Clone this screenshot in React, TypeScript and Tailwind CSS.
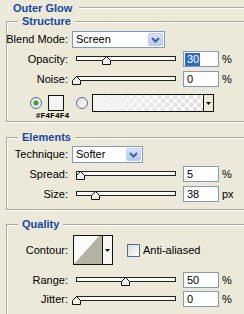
import type { ReactNode } from 'react';

function Label({ children }: { children: ReactNode }) {
  return (
    <span className="flex w-[61px] shrink-0 justify-end whitespace-nowrap leading-[13px]">
      <span>{children}</span>
    </span>
  );
}

function Group({ title, className, children }: { title: string; className: string; children: ReactNode }) {
  return (
    <div
      className={`relative ml-[6px] border-y border-l border-[#aca899] shadow-[inset_1px_1px_0_#fff,0_1px_0_#fff] ${className}`}
    >
      <span className="absolute left-[11px] top-[-7px] bg-[#ece9d8] px-[4px] font-bold leading-[13px] text-[#1747a6]">
        {title}
      </span>
      {children}
    </div>
  );
}

function Slider({ thumb }: { thumb: number }) {
  const cx = thumb + 0.5;
  return (
    <svg className="ml-[4px] shrink-0" width={108} height={16} viewBox="0 0 108 16">
      <rect x={4.5} y={5.5} width={99} height={4} fill="#fbfbf8" stroke="#222" />
      <polygon
        points={`${cx},5.5 ${cx + 4},9.5 ${cx + 4},13.5 ${cx - 4},13.5 ${cx - 4},9.5`}
        fill="#f1f0ea"
        stroke="#111"
      />
    </svg>
  );
}

function SliderRow({
  label,
  thumb,
  value,
  unit,
  selected,
  className
}: {
  label: string;
  thumb: number;
  value: string;
  unit: string;
  selected?: boolean;
  className: string;
}) {
  return (
    <div className={`flex h-[16px] items-center ${className}`}>
      <Label>{label}</Label>
      <Slider thumb={thumb} />
      <div className="ml-[3px] flex h-[16px] w-[36px] shrink-0 items-center border border-[#7f9db9] bg-white pl-[1px]">
        {selected ? (
          <span className="bg-[#316ac5] pl-[2px] pr-[1px] leading-[13px] text-white">{value}</span>
        ) : (
          <span className="pl-[2px] leading-[13px]">{value}</span>
        )}
      </div>
      <span className="ml-[3px] leading-[13px]">{unit}</span>
    </div>
  );
}

function Select({ value, width }: { value: string; width: string }) {
  return (
    <div className={`ml-[4px] flex h-[17px] shrink-0 border border-[#7f9db9] bg-white ${width}`}>
      <span className="flex-1 pl-[3px] leading-[15px]">{value}</span>
      <div className="m-[1px] flex w-[15px] items-center justify-center rounded-[2px] border border-[#bccdf7] bg-[linear-gradient(#d6e2fd,#b7c9f6)]">
        <svg width={9} height={6} viewBox="0 0 9 6">
          <path d="M1 1 L4.5 4.5 L8 1" fill="none" stroke="#4d6185" strokeWidth={2} />
        </svg>
      </div>
    </div>
  );
}

function Radio({ checked }: { checked?: boolean }) {
  return (
    <svg className="mt-[3px] shrink-0" width={12} height={12} viewBox="0 0 12 12">
      <defs>
        <linearGradient id="rf" x1="0" y1="0" x2="1" y2="1">
          <stop offset="0" stopColor="#dcdcd5" />
          <stop offset="1" stopColor="#ffffff" />
        </linearGradient>
      </defs>
      <circle cx={6} cy={6} r={5.5} fill="url(#rf)" stroke="#4a6f9e" />
      {checked ? <circle cx={6} cy={6} r={2.5} fill="#2fa52a" /> : null}
    </svg>
  );
}

function GradientSwatch() {
  return (
    <svg className="ml-[4px] shrink-0" width={122} height={18} viewBox="0 0 122 18">
      <defs>
        <pattern id="ck" width={8} height={8} patternUnits="userSpaceOnUse" x={1} y={1}>
          <rect width={8} height={8} fill="#ffffff" />
          <rect width={4} height={4} fill="#dedede" />
          <rect x={4} y={4} width={4} height={4} fill="#dedede" />
        </pattern>
        <linearGradient id="fade" x1="0" y1="0" x2="1" y2="0">
          <stop offset="0" stopColor="#f4f4f4" stopOpacity={1} />
          <stop offset="1" stopColor="#f4f4f4" stopOpacity={0} />
        </linearGradient>
      </defs>
      <rect x={1} y={1} width={110} height={16} fill="url(#ck)" />
      <rect x={1} y={1} width={110} height={16} fill="url(#fade)" />
      <rect x={111} y={1} width={10} height={16} fill="#ece9d8" />
      <rect x={0.5} y={0.5} width={121} height={17} fill="none" stroke="#111" />
      <line x1={111.5} y1={1} x2={111.5} y2={17} stroke="#111" />
      <polygon points="114,8 119,8 116.5,11" fill="#111" />
    </svg>
  );
}

export default function App() {
  return (
    <div className="h-[314px] w-[244px] overflow-hidden bg-[#ece9d8] font-['Liberation_Sans',Arial,sans-serif] text-[11px] text-black">
      <div className="flex h-[16px] items-center pl-[13px]">
        <span className="font-bold leading-[13px] text-[#1747a6]">Outer Glow</span>
        <div className="ml-[7px] h-[2px] flex-1 border-t border-b border-t-[#aca899] border-b-white" />
      </div>

      <Group title="Structure" className="mt-[5px] h-[101px]">
        <div className="mt-[9px] flex h-[17px] items-center">
          <Label>Blend Mode:</Label>
          <Select value="Screen" width="w-[93px]" />
        </div>
        <SliderRow className="mt-[3px]" label="Opacity:" thumb={34} value="30" unit="%" selected />
        <SliderRow className="mt-[4px]" label="Noise:" thumb={4} value="0" unit="%" />
        <div className="mt-[7px] flex items-start pl-[23px]">
          <Radio checked />
          <div className="ml-[6px] mt-[1px] flex w-[16px] shrink-0 flex-col items-center">
            <div className="h-[16px] w-[16px] border border-[#111] bg-[#f4f4f4]" />
            <span className="mr-[7px] whitespace-nowrap font-['Liberation_Mono',monospace] text-[8px] font-bold leading-[9px]">
              #F4F4F4
            </span>
          </div>
          <div className="ml-[12px]">
            <Radio />
          </div>
          <GradientSwatch />
        </div>
      </Group>

      <Group title="Elements" className="mt-[15px] h-[73px]">
        <div className="mt-[8px] flex h-[17px] items-center">
          <Label>Technique:</Label>
          <Select value="Softer" width="w-[71px]" />
        </div>
        <SliderRow className="mt-[3px]" label="Spread:" thumb={8} value="5" unit="%" />
        <SliderRow className="mt-[4px]" label="Size:" thumb={23} value="38" unit="px" />
      </Group>

      <Group title="Quality" className="mt-[14px] h-[100px]">
        <div className="mt-[10px] flex h-[30px] items-center">
          <Label>Contour:</Label>
          <div className="ml-[5px] flex h-[30px] shrink-0">
            <svg width={30} height={30} viewBox="0 0 30 30">
              <rect x={0} y={0} width={30} height={30} fill="#fbfbf8" />
              <polygon points="1,29 26,1 29,1 29,29" fill="#b7b3a3" />
              <rect x={0.5} y={0.5} width={29} height={29} fill="none" stroke="#111" />
            </svg>
            <div className="flex w-[10px] items-center justify-center border-y border-r border-[#111] bg-[#f7f6f1]">
              <svg width={5} height={3} viewBox="0 0 5 3">
                <polygon points="0,0 5,0 2.5,3" fill="#111" />
              </svg>
            </div>
          </div>
          <div className="ml-[14px] h-[13px] w-[13px] shrink-0 border border-[#4d6f9c] bg-[linear-gradient(135deg,#dcdcd5,#ffffff)]" />
          <span className="ml-[3px] leading-[13px]">Anti-aliased</span>
        </div>
        <SliderRow className="mt-[7px]" label="Range:" thumb={53} value="50" unit="%" />
        <SliderRow className="mt-[3px]" label="Jitter:" thumb={4} value="0" unit="%" />
      </Group>
    </div>
  );
}
